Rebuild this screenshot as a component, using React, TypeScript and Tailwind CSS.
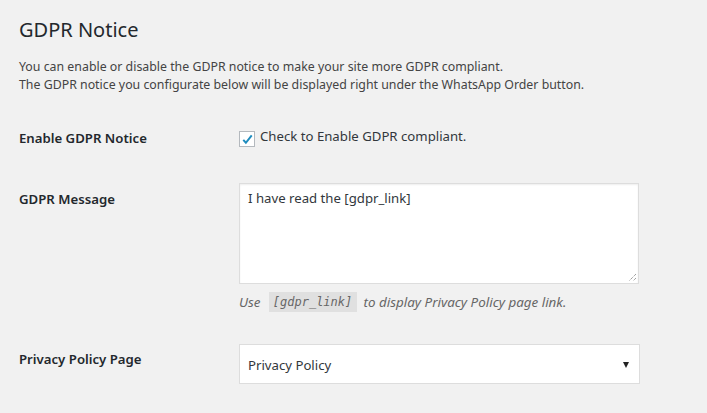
import React from "react";

export default function App() {
  const font = { fontFamily: '"Noto Sans", "Open Sans", sans-serif' };
  return (
    <div className="w-[707px] h-[413px] bg-[#f1f1f1] overflow-hidden text-[#444]" style={font}>
      <div className="pl-[19px] pt-[15px]">
        <h2 className="text-[20px] leading-[30px] text-[#23282d] font-normal">GDPR Notice</h2>
        <div className="mt-[13px] text-[12.35px] leading-[18px] text-[#444]">
          <p>You can enable or disable the GDPR notice to make your site more GDPR compliant.</p>
          <p>The GDPR notice you configurate below will be displayed right under the WhatsApp Order button.</p>
        </div>

        {/* Row 1 */}
        <div className="flex mt-[35px] h-[18px] items-center">
          <div className="w-[220px] text-[13.2px] font-semibold text-[#23282d] mt-[2px]">Enable GDPR Notice</div>
          <label className="flex items-center">
            <span className="w-[16px] h-[16px] bg-white border border-[#b4b9be] flex items-center justify-center mt-[2px]">
              <svg width="13" height="13" viewBox="0 0 20 20">
                <path d="M3.5 10.5 L7.5 15 L16.5 3.5" fill="none" stroke="#1e8cbe" strokeWidth="3" />
              </svg>
            </span>
            <span className="ml-[5px] text-[13.2px] text-[#32373c] -mt-[2px]">Check to Enable GDPR compliant.</span>
          </label>
        </div>

        {/* Row 2 */}
        <div className="flex mt-[36px]">
          <div className="w-[220px] pt-[7px] text-[13.2px] font-semibold text-[#23282d]">GDPR Message</div>
          <div>
            <div className="relative w-[400px] h-[101px] bg-white border border-[#ddd] shadow-[inset_0_1px_2px_rgba(0,0,0,0.07)]">
              <div className="pl-[8px] pt-[2px] text-[13.2px] leading-[24px] text-[#32373c]">I have read the [gdpr_link]</div>
              <svg className="absolute right-[1px] bottom-[1px]" width="10" height="10" viewBox="0 0 10 10">
                <path d="M9 2 L2 9 M9 6 L6 9" stroke="#777" strokeWidth="1" strokeDasharray="1 1" />
              </svg>
            </div>
            <div className="mt-[8px] flex items-center text-[13.4px] italic text-[#666] h-[20px]">
              <span>Use</span>
              <code className="ml-[8px] mr-[7px] h-[20px] w-[88px] flex items-center justify-center bg-[#e0e0e0] text-[12px] text-[#666]" style={{ fontFamily: '"DejaVu Sans Mono", monospace' }}>[gdpr_link]</code>
              <span>to display Privacy Policy page link.</span>
            </div>
          </div>
        </div>

        {/* Row 3 */}
        <div className="flex mt-[32px]">
          <div className="w-[220px] pt-[6px] text-[13.2px] font-semibold text-[#23282d]">Privacy Policy Page</div>
          <div className="w-[401px] h-[40px] bg-white border border-[#ddd] flex items-center justify-between pl-[8px] pr-[10px]">
            <span className="text-[13.2px] text-[#32373c] mt-[3px]">Privacy Policy</span>
            <svg width="6" height="8" viewBox="0 0 6 8" className="mt-[1px]">
              <path d="M0 1 L6 1 L3 7 Z" fill="#222" />
            </svg>
          </div>
        </div>
      </div>
    </div>
  );
}
